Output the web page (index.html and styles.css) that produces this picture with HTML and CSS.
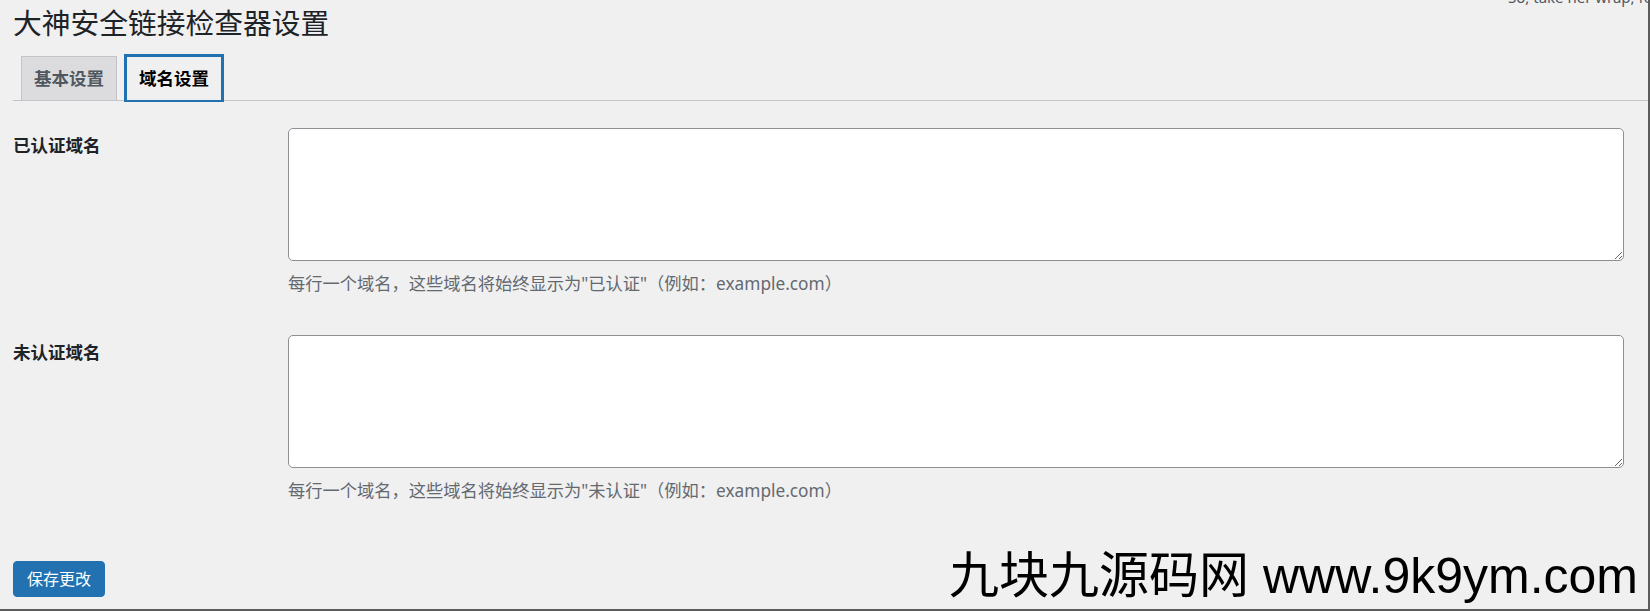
FILE: index.html
```html
<!DOCTYPE html>
<html lang="zh-CN">
<head>
    <meta charset="UTF-8">
    <meta name="viewport" content="width=device-width, initial-scale=1.0">
    <title>大神安全链接检查器设置</title>
    <link rel="stylesheet" href="styles.css">
</head>

<body>
    <p class="dolly">So, take her wrap, fellas</p>

    <div class="wrap">
        <h1>大神安全链接检查器设置</h1>

        <nav class="nav-tab-wrapper">
            <a href="#" class="nav-tab">基本设置</a>
            <a href="#" class="nav-tab nav-tab-active">域名设置</a>
        </nav>

        <form class="settings">
            <div class="form-row">
                <label class="form-label" for="verified">已认证域名</label>
                <div class="form-field">
                    <textarea id="verified" name="verified"></textarea>
                    <p class="description">每行一个域名，这些域名将始终显示为"已认证"（例如：example.com）</p>
                </div>
            </div>

            <div class="form-row">
                <label class="form-label" for="unverified">未认证域名</label>
                <div class="form-field">
                    <textarea id="unverified" name="unverified"></textarea>
                    <p class="description">每行一个域名，这些域名将始终显示为"未认证"（例如：example.com）</p>
                </div>
            </div>

            <p class="submit">
                <button type="submit" class="button-primary">保存更改</button>
            </p>
        </form>
    </div>

    <div class="watermark">九块九源码网 www.9k9ym.com</div>
</body>

</html>
```

FILE: styles.css
```css
html {
    height: 100%;
}

body {
    margin: 0;
    height: 100%;
    box-sizing: border-box;
    position: relative;
    overflow: hidden;
    background-color: #f0f0f1;
    color: #1d2327;
    font-family: "Noto Sans", "Noto Sans CJK SC", sans-serif;
    border-right: 2px solid #5c5c5c;
    border-bottom: 2px solid #5c5c5c;
}

.dolly {
    position: absolute;
    top: -11px;
    left: 1508px;
    margin: 0;
    font-size: 15px;
    line-height: 16px;
    color: #50575e;
    white-space: nowrap;
}

.wrap {
    padding-left: 13px;
}

h1 {
    margin: 0;
    padding-top: 4px;
    font-size: 28.75px;
    line-height: 37px;
    font-weight: 400;
    color: #1d2327;
}

.nav-tab-wrapper {
    display: flex;
    align-items: flex-end;
    margin-top: 15px;
    border-bottom: 1px solid #c3c4c7;
}

.nav-tab {
    position: relative;
    margin-left: 8px;
    padding: 6px 12px;
    font-size: 17.5px;
    line-height: 31px;
    font-weight: 600;
    color: #50575e;
    text-decoration: none;
    background-color: #dcdcde;
    border: 1px solid #c3c4c7;
    border-bottom: none;
}

.nav-tab-active {
    margin-left: 9px;
    color: #000;
    background-color: #f0f0f1;
    border-color: #2271b1;
    box-shadow: 0 0 0 2px #2271b1;
    z-index: 1;
}

.settings {
    margin-top: 8px;
}

.form-row {
    display: grid;
    grid-template-columns: 275px 1fr;
    padding-right: 24px;
}

.form-label {
    padding-top: 25px;
    font-size: 17.5px;
    line-height: 22.75px;
    font-weight: 600;
    color: #1d2327;
}

.form-field {
    padding: 19px 0 21px;
}

.form-field textarea {
    display: block;
    width: 100%;
    height: 133px;
    box-sizing: border-box;
    margin: 0;
    padding: 3px 10px;
    border: 1px solid #8c8f94;
    border-radius: 5px;
    background-color: #fff;
    font-family: inherit;
    font-size: 17.5px;
}

.description {
    margin: 11px 0 0;
    font-size: 17.25px;
    line-height: 23px;
    color: #646970;
}

.submit {
    margin: 38px 0 0;
}

.button-primary {
    height: 36px;
    padding: 0 13px;
    font-family: inherit;
    font-size: 16px;
    line-height: 34px;
    color: #fff;
    background-color: #2271b1;
    border: 1px solid #2271b1;
    border-radius: 4px;
    cursor: pointer;
}

.watermark {
    position: absolute;
    right: 10px;
    bottom: 8px;
    font-family: "Liberation Sans", "Noto Sans CJK SC", sans-serif;
    font-size: 50px;
    line-height: 50px;
    color: #000;
    white-space: nowrap;
}
```
